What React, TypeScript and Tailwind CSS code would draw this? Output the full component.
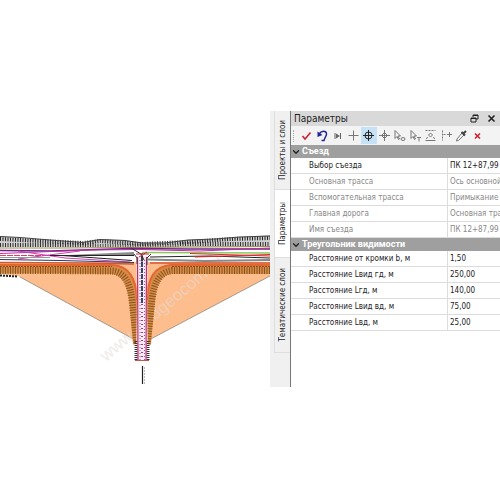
import { useState } from "react";
import type { ReactNode } from "react";
import { ChevronDown } from "lucide-react";
import clsx from "clsx";

const TABS = [
  { key: "projects", label: "Проекты и слои", height: "h-[79px]" },
  { key: "params", label: "Параметры", height: "h-[68px]" },
  { key: "themes", label: "Тематические слои", height: "h-[95px]" },
];

const GROUPS = [
  {
    key: "exit",
    title: "Съезд",
    rows: [
      { key: "pick", label: "Выбор съезда", value: "ПК 12+87,99", locked: false },
      { key: "main", label: "Основная трасса", value: "Ось основной трассы", locked: true },
      { key: "aux", label: "Вспомогательная трасса", value: "Примыкание 1", locked: true },
      { key: "road", label: "Главная дорога", value: "Основная трасса", locked: true },
      { key: "name", label: "Имя съезда", value: "ПК 12+87,99", locked: true },
    ],
  },
  {
    key: "triangle",
    title: "Треугольник видимости",
    rows: [
      { key: "b", label: "Расстояние от кромки b, м", value: "1,50", locked: false },
      { key: "lvidgd", label: "Расстояние Lвид гд, м", value: "250,00", locked: false },
      { key: "lgd", label: "Расстояние Lгд, м", value: "140,00", locked: false },
      { key: "lvidvd", label: "Расстояние Lвид вд, м", value: "75,00", locked: false },
      { key: "lvd", label: "Расстояние Lвд, м", value: "25,00", locked: false },
    ],
  },
];

const TOOLS: { key: string; label: string; icon: ReactNode }[] = [
  {
    key: "apply",
    label: "Применить",
    icon: <path d="M2.5 7 5 10 10.5 3.5" stroke="#d0202c" strokeWidth="1.5" />,
  },
  {
    key: "undo",
    label: "Отменить",
    icon: (
      <>
        <path d="M3.5 4.5C5.5 1.5 10 1.5 10.5 4.5 10.8 7 9 7.5 8 11.5H5.5" stroke="#23239a" strokeWidth="1.4" />
        <path d="M1.5 2.5V8L6.5 6z" fill="#23239a" />
      </>
    ),
  },
  {
    key: "next",
    label: "Далее",
    icon: (
      <>
        <path d="M4 4v6M9.5 4v6" stroke="#666" />
        <path d="M5 4.5 9 7l-4 2.5z" fill="#666" />
      </>
    ),
  },
  { key: "cross", label: "Точка", icon: <path d="M6.5 1.5v10M1.5 6.5h10" stroke="#777" /> },
  {
    key: "snap",
    label: "Привязка",
    icon: (
      <>
        <circle cx="6.5" cy="6.5" r="3.5" stroke="#222" />
        <path d="M6.5 1v11M1 6.5h11" stroke="#222" />
      </>
    ),
  },
  {
    key: "node",
    label: "Узел",
    icon: (
      <>
        <path d="m6.5 3.5 3 3-3 3-3-3z" stroke="#777" />
        <path d="M6.5 1v11M1 6.5h11" stroke="#777" />
      </>
    ),
  },
  {
    key: "pickObject",
    label: "Выбрать объект",
    icon: (
      <>
        <path d="M2 1.5v8l2-2 1.5 3 1-.5L5 7h2.5z" stroke="#777" />
        <ellipse cx="10" cy="10" rx="2" ry="1.5" stroke="#777" />
      </>
    ),
  },
  {
    key: "pickText",
    label: "Выбрать текст",
    icon: (
      <>
        <path d="M2 1.5v8l2-2 1.5 3 1-.5L5 7h2.5z" stroke="#777" />
        <path d="M8 8.5h4M10 8.5v4" stroke="#777" />
      </>
    ),
  },
  {
    key: "between",
    label: "Между",
    icon: (
      <>
        <path d="M1.5 1.5h10" stroke="#777" strokeDasharray="2 1" />
        <path d="m6.5 4 2 2-2 2-2-2zM1.5 11.5h10M2 9.5l2-1M11 9.5l-2-1" stroke="#777" />
      </>
    ),
  },
  {
    key: "offset",
    label: "Смещение",
    icon: (
      <>
        <path d="M2.5 1.5v10" stroke="#777" strokeDasharray="2 1" />
        <path d="M3.5 5.5h2M7 5.5h5M9.5 3v5" stroke="#777" />
      </>
    ),
  },
  {
    key: "pipette",
    label: "Пипетка",
    icon: (
      <>
        <path d="m7 4 2 2-5.5 5.5-2 .5.5-2z" stroke="#777" />
        <path d="m6.5 3 3.5 3.5M8.5 4.5 11 2" stroke="#444" strokeWidth="2" />
      </>
    ),
  },
  {
    key: "cancel",
    label: "Прервать",
    icon: <path d="m4 4.5 5 5M9 4.5l-5 5" stroke="#c8202c" strokeWidth="1.5" />,
  },
];

function RoadPlan() {
  return (
    <svg
      viewBox="0 111 270 276"
      preserveAspectRatio="xMidYMid slice"
      className="h-full w-full"
      fill="none"
      role="img"
      aria-label="План примыкания"
    >
      {/* Visibility triangle */}
      <path d="M0 262H270V276L147 341H137L18 276 0 274Z" fill="#fdbd8d" />
      <path d="M20 277 137 341M270 276 147 341" stroke="#8d8a80" strokeWidth=".8" />

      <text
        x="106"
        y="362"
        transform="rotate(-40 106 362)"
        className="font-['Liberation_Sans'] text-[17px]"
        fill="#e6dcd6"
        fillOpacity=".6"
      >
        www.credgeocom.ru
      </text>

      {/* Upper slope */}
      <path d="M0 236 20 238 50 240 83 243 100 239 125 240 142 243 165 243 188 240 215 239 240 237 270 235V247H0Z" fill="#cfcfcf" />
      <path d="M0 245H95M180 244H270" stroke="#333" strokeWidth="4" strokeDasharray="1 1.5" />
      <path d="M95 245.5H180" stroke="#555" strokeWidth="3" strokeDasharray="1 1.5" />
      <path d="M0 239 40 241 83 243 100 241 142 244 190 242 230 239 270 238" stroke="#222" strokeWidth="4" strokeDasharray="1 1.5" />
      <path d="M0 236.5 20 237.5 50 240 83 242.5 100 239.5 125 240.5 142 243 165 243 188 240 215 239 240 237 270 236" stroke="#444" />
      <path d="M0 248 60 248 130 247.5 270 246.5" stroke="#9a8c48" />

      {/* Carriageway */}
      <path d="M0 250.5 50 251 130 248.5 190 249 270 249" stroke="#70218a" strokeWidth="1.3" />
      <path d="M0 253.5 90 250 140 249.5 200 251 270 248" stroke="#b5309b" />
      <path d="M0 255.5H58" stroke="#e53b65" strokeDasharray="6 1" />
      <path d="M142 252.5 270 253" stroke="#8bc95b" strokeWidth="1.4" />
      <path d="M18 251 65 258 130 262" stroke="#ce3fb6" />
      <path d="M18 259 80 251" stroke="#ce3fb6" />
      <path d="M58 255.5 134 252V256Z" fill="#8b8b8b" />
      <path d="M50 255.5H134M62 255.5 132 260.5M150 257 210 256 270 258" stroke="#252525" strokeWidth="1.2" />
      <path d="M0 257.5H50" stroke="#999" />
      <path d="M148 259.5 205 261 270 260" stroke="#888" strokeWidth="2" />
      <path d="M190 253.5 270 256M195 257 270 254.5" stroke="#d92a2a" />
      <path d="M0 259.5 60 260.5 134 262.5" stroke="#2c3760" />
      <path d="M0 262.5 80 263 134 264M150 263H270" stroke="#d6542f" strokeWidth="1.3" />

      {/* Lower slope, wrapping into the side road */}
      <path d="M0 268.5H50L112 269C126 270 132 282 134 300L138 344M270 269H172C158 270 152 280 150 300L146 344" stroke="#dc8a48" strokeWidth="10" />
      <path d="M0 270.5H50L112 271C125 272 130 284 132 300L137 344M270 270.5H172C159 272 154 284 152 300L147 344" stroke="#80581f" strokeWidth="7" strokeDasharray="1 1.5" />
      <path d="M0 265H112C130 266 136 279 137 300M270 265H172C153 266 148 279 147 300" stroke="#e0672f" strokeWidth="2" />
      <path d="M0 266.5H112M270 266.5H172" stroke="#8c4a1e" strokeDasharray="2 1" />
      <path d="M0 275.5 18 276.5" stroke="#222" strokeWidth="2" strokeDasharray="2 1" />

      {/* Side road */}
      <path d="M136 256H148L147 300 148 360H136L137 300Z" fill="#f6eaf3" />
      <path d="M136 341V360M148 341V360" stroke="#333" strokeWidth="3" strokeDasharray="1 1" />
      <path d="M137.5 257 138 360M146.5 257 146 360" stroke="#c42d63" strokeWidth="1.2" />
      <path d="M140 260V360M144.5 260V360" stroke="#9a55c4" strokeDasharray="1 2" />
      <path d="M142 304V360" stroke="#a83b78" strokeWidth="2" strokeDasharray="1 3" />
      <path d="M142 256V304" stroke="#3a4468" strokeWidth="2" strokeDasharray="5 1" />
      <path d="M131 248 141 254 144 260M134 254 137 258V264M151 254 147 258V265M142 253V263" stroke="#333" />
      <path d="M136 254H149M139 257 147 252" stroke="#c3263c" />
      <path d="M135 360.5H149" stroke="#b95b4b" />
      <path d="M142.5 366V384" stroke="#222" strokeWidth="1.2" />
      <path d="M144.5 367V384" stroke="#bbb" strokeDasharray="2 1" />
    </svg>
  );
}

export default function App() {
  const [tab, setTab] = useState("params");
  const [tool, setTool] = useState("snap");
  const [closed, setClosed] = useState<string[]>([]);

  const toggle = (key: string) =>
    setClosed((prev) => (prev.includes(key) ? prev.filter((k) => k !== key) : [...prev, key]));

  return (
    <div className="min-h-screen bg-white py-[111px] font-['DejaVu_Sans_Condensed','DejaVu_Sans',sans-serif] text-[8px] text-[#222]">
      <main className="flex overflow-hidden">
        <section className="h-[276px] min-w-0 flex-1">
          <RoadPlan />
        </section>

        {/* Side tabs */}
        <nav className="flex w-[21px] shrink-0 flex-col border-r border-[#777] bg-[#f0f0f0] pl-1">
          {TABS.map((t) => (
            <button
              key={t.key}
              type="button"
              onClick={() => setTab(t.key)}
              className={clsx(
                "flex items-center justify-center border-b border-l border-[#dedede] leading-3",
                t.height,
                tab === t.key && "bg-white",
              )}
            >
              <span className="rotate-180 whitespace-nowrap [writing-mode:vertical-rl]">{t.label}</span>
            </button>
          ))}
        </nav>

        <aside className="flex w-[209px] shrink-0 flex-col">
          <header className="flex h-[15px] items-center bg-[#d9d9d9] pl-[3px]">
            <h1 className="flex-1 text-[10px] leading-3">Параметры</h1>
            <button type="button" aria-label="Открепить" className="mr-2">
              <svg viewBox="0 0 9 9" className="size-[9px]" fill="none" stroke="#222">
                <path d="M3 3V1h5v4H6M3 1.5h5M1 4h5v4H1zM1 4.5h5" />
              </svg>
            </button>
            <button type="button" aria-label="Закрыть" className="mr-1">
              <svg viewBox="0 0 9 9" className="size-[9px]" fill="none" stroke="#222" strokeWidth="1.6">
                <path d="m1.5 1.5 6 6M7.5 1.5l-6 6" />
              </svg>
            </button>
          </header>

          <div className="flex h-[19px] items-center bg-[#f3f3f3] pr-[15px]" role="toolbar">
            <span className="mr-1 ml-[2px] h-3 w-[2px] border-l border-dotted border-[#aaa]" />
            {TOOLS.map((t) => (
              <button
                key={t.key}
                type="button"
                aria-label={t.label}
                onClick={() => setTool(t.key)}
                className={clsx(
                  "flex h-[17px] flex-1 items-center justify-center",
                  tool === t.key && "bg-[#c5e2f7]",
                )}
              >
                <svg viewBox="0 0 13 13" className="size-[13px]" fill="none">
                  {t.icon}
                </svg>
              </button>
            ))}
          </div>

          {GROUPS.map((g) => (
            <section key={g.key}>
              <h2>
                <button
                  type="button"
                  onClick={() => toggle(g.key)}
                  className="flex h-[13px] w-full items-center gap-px bg-[#9f9f9f] font-['Roboto',sans-serif] text-[9px] font-bold text-white"
                >
                  <ChevronDown className="size-[10px] text-[#222]" strokeWidth={3} />
                  {g.title}
                </button>
              </h2>
              {!closed.includes(g.key) &&
                g.rows.map((r) => (
                  <div
                    key={r.key}
                    className={clsx(
                      "flex h-4 border-b border-[#dcdcdc] leading-4",
                      r.locked && "text-[#888]",
                    )}
                  >
                    <label
                      htmlFor={r.key}
                      className="w-[157px] shrink-0 border-r border-[#dcdcdc] pl-[18px]"
                    >
                      {r.label}
                    </label>
                    <input
                      id={r.key}
                      defaultValue={r.value}
                      readOnly={r.locked}
                      className="h-4 min-w-0 flex-1 bg-transparent pl-[2px] leading-4 outline-none"
                    />
                  </div>
                ))}
            </section>
          ))}
        </aside>
      </main>
    </div>
  );
}
